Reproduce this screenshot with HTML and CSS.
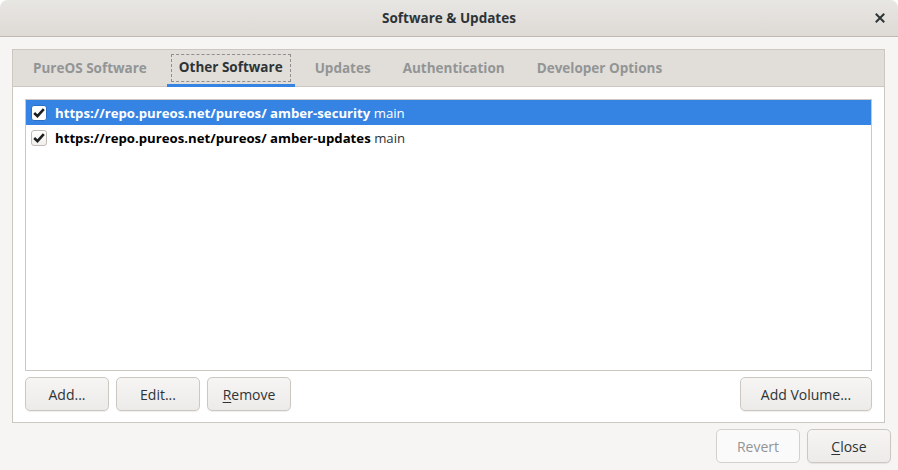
FILE: index.html
```html
<!DOCTYPE html>
<html>
<head>
<meta charset="utf-8">
<link rel="stylesheet" href="styles.css">
</head>
<body>
<div class="window">
  <header class="titlebar">
    <div class="tb-side"></div>
    <div class="title">Software &amp; Updates</div>
    <div class="tb-side tb-right">
      <button class="wm-close" aria-label="Close">
        <svg width="10" height="10" viewBox="0 0 10 10"><path d="M1.5 1.5 L8.5 8.5 M8.5 1.5 L1.5 8.5" stroke="#2e3436" stroke-width="2" stroke-linecap="square"/></svg>
      </button>
    </div>
  </header>
  <main class="content">
    <section class="notebook">
      <nav class="tabs">
        <div class="tab">PureOS Software</div>
        <div class="tab active"><span class="focus">Other Software</span></div>
        <div class="tab">Updates</div>
        <div class="tab">Authentication</div>
        <div class="tab">Developer Options</div>
      </nav>
      <div class="page">
        <div class="list">
          <div class="row selected">
            <span class="check"><svg width="14" height="14" viewBox="0 0 14 14"><path d="M2.2 7 L5.5 10.2 L11.8 3.2" fill="none" stroke="#1c1f20" stroke-width="2.6"/></svg></span>
            <span class="row-text"><b>https://repo.pureos.net/pureos/ amber-security</b> main</span>
          </div>
          <div class="row">
            <span class="check"><svg width="14" height="14" viewBox="0 0 14 14"><path d="M2.2 7 L5.5 10.2 L11.8 3.2" fill="none" stroke="#1c1f20" stroke-width="2.6"/></svg></span>
            <span class="row-text"><b>https://repo.pureos.net/pureos/ amber-updates</b> main</span>
          </div>
        </div>
        <div class="page-actions">
          <button class="btn">Add...</button>
          <button class="btn">Edit...</button>
          <button class="btn"><u>R</u>emove</button>
          <span class="spacer"></span>
          <button class="btn btn-wide">Add Volume...</button>
        </div>
      </div>
    </section>
    <div class="dialog-actions">
      <button class="btn" disabled>Revert</button>
      <button class="btn"><u>C</u>lose</button>
    </div>
  </main>
</div>
</body>
</html>
```

FILE: styles.css
```css
* { box-sizing: border-box; }
html, body { margin: 0; padding: 0; }
body {
  width: 898px;
  height: 470px;
  background: #ffffff;
  font-family: "Open Sans", "Noto Sans", sans-serif;
  font-size: 14px;
  color: #2e3436;
  overflow: hidden;
}
.window {
  width: 898px;
  height: 470px;
  display: flex;
  flex-direction: column;
  background: #f6f5f4;
  border-radius: 8px 8px 0 0;
  overflow: hidden;
}
.titlebar {
  height: 37px;
  flex: none;
  display: grid;
  grid-template-columns: 1fr auto 1fr;
  align-items: center;
  background: linear-gradient(#e8e6e3, #dedad6);
  border-bottom: 1px solid #c0b9b3;
}
.title {
  font-weight: 700;
  font-size: 13.5px;
  color: #2e3436;
}
.tb-right { display: flex; justify-content: flex-end; padding-right: 10px; }
.wm-close {
  border: none;
  background: transparent;
  padding: 0;
  width: 16px;
  height: 16px;
  display: flex;
  align-items: center;
  justify-content: center;
}
.content {
  flex: 1;
  display: flex;
  flex-direction: column;
  padding: 12px 13px 0 12px;
}
.notebook {
  border: 1px solid #cdc7c2;
  display: flex;
  flex-direction: column;
  background: #ffffff;
}
.tabs {
  height: 37px;
  background: #e1ddd9;
  border-bottom: 1px solid #cdc7c2;
  display: flex;
  gap: 8px;
  padding: 0 8px;
  font-size: 13.5px;
}
.tab {
  padding: 0 12px;
  display: flex;
  align-items: center;
  font-weight: 700;
  color: #929595;
  border-bottom: 2px solid transparent;
  margin-bottom: -1px;
}
.tab.active {
  color: #2e3436;
  border-bottom: 3px solid #3584e4;
  padding: 0 4px;
}
.tab .focus {
  border: 1px dashed #8f8f8f;
  padding: 3px 7px 5px;
  margin-top: 2px;
}
.page {
  padding: 12px 12px 11px;
  display: flex;
  flex-direction: column;
  gap: 6px;
}
.list {
  height: 272px;
  border: 1px solid #cdc7c2;
  background: #ffffff;
}
.row {
  height: 25px;
  display: flex;
  align-items: center;
  padding-left: 5px;
  gap: 8px;
  color: #2e3436;
  font-size: 13.2px;
}
.row b { color: #000; }
.row.selected { background: #3584e4; color: #ffffff; }
.row.selected b { color: #ffffff; }
.check {
  width: 16px;
  height: 16px;
  border: 1px solid #c2bcb6;
  border-radius: 3px;
  background: linear-gradient(#ffffff, #f1efed);
  display: flex;
  align-items: center;
  justify-content: center;
}
.row.selected .check { border-color: #2a6fc4; background: #fff; }
.page-actions {
  display: flex;
  gap: 7px;
}
.spacer { flex: 1; }
.btn {
  height: 34px;
  width: 84px;
  font-family: inherit;
  font-size: 14px;
  color: #2e3436;
  border: 1px solid #cdc7c2;
  border-radius: 5px;
  background: linear-gradient(#f6f5f4, #edebe9);
  box-shadow: 0 1px 1px rgba(0,0,0,0.07);
  padding: 0 10px;
}
.btn u { text-decoration-thickness: 1px; text-underline-offset: 2px; }
.btn-wide { width: 132px; }
.btn:disabled {
  color: #929595;
  background: #fafafa;
  border-color: #d5d0cc;
  box-shadow: none;
}
.dialog-actions {
  display: flex;
  justify-content: flex-end;
  gap: 7px;
  padding-top: 6px;
  margin-right: -6px;
}
```
